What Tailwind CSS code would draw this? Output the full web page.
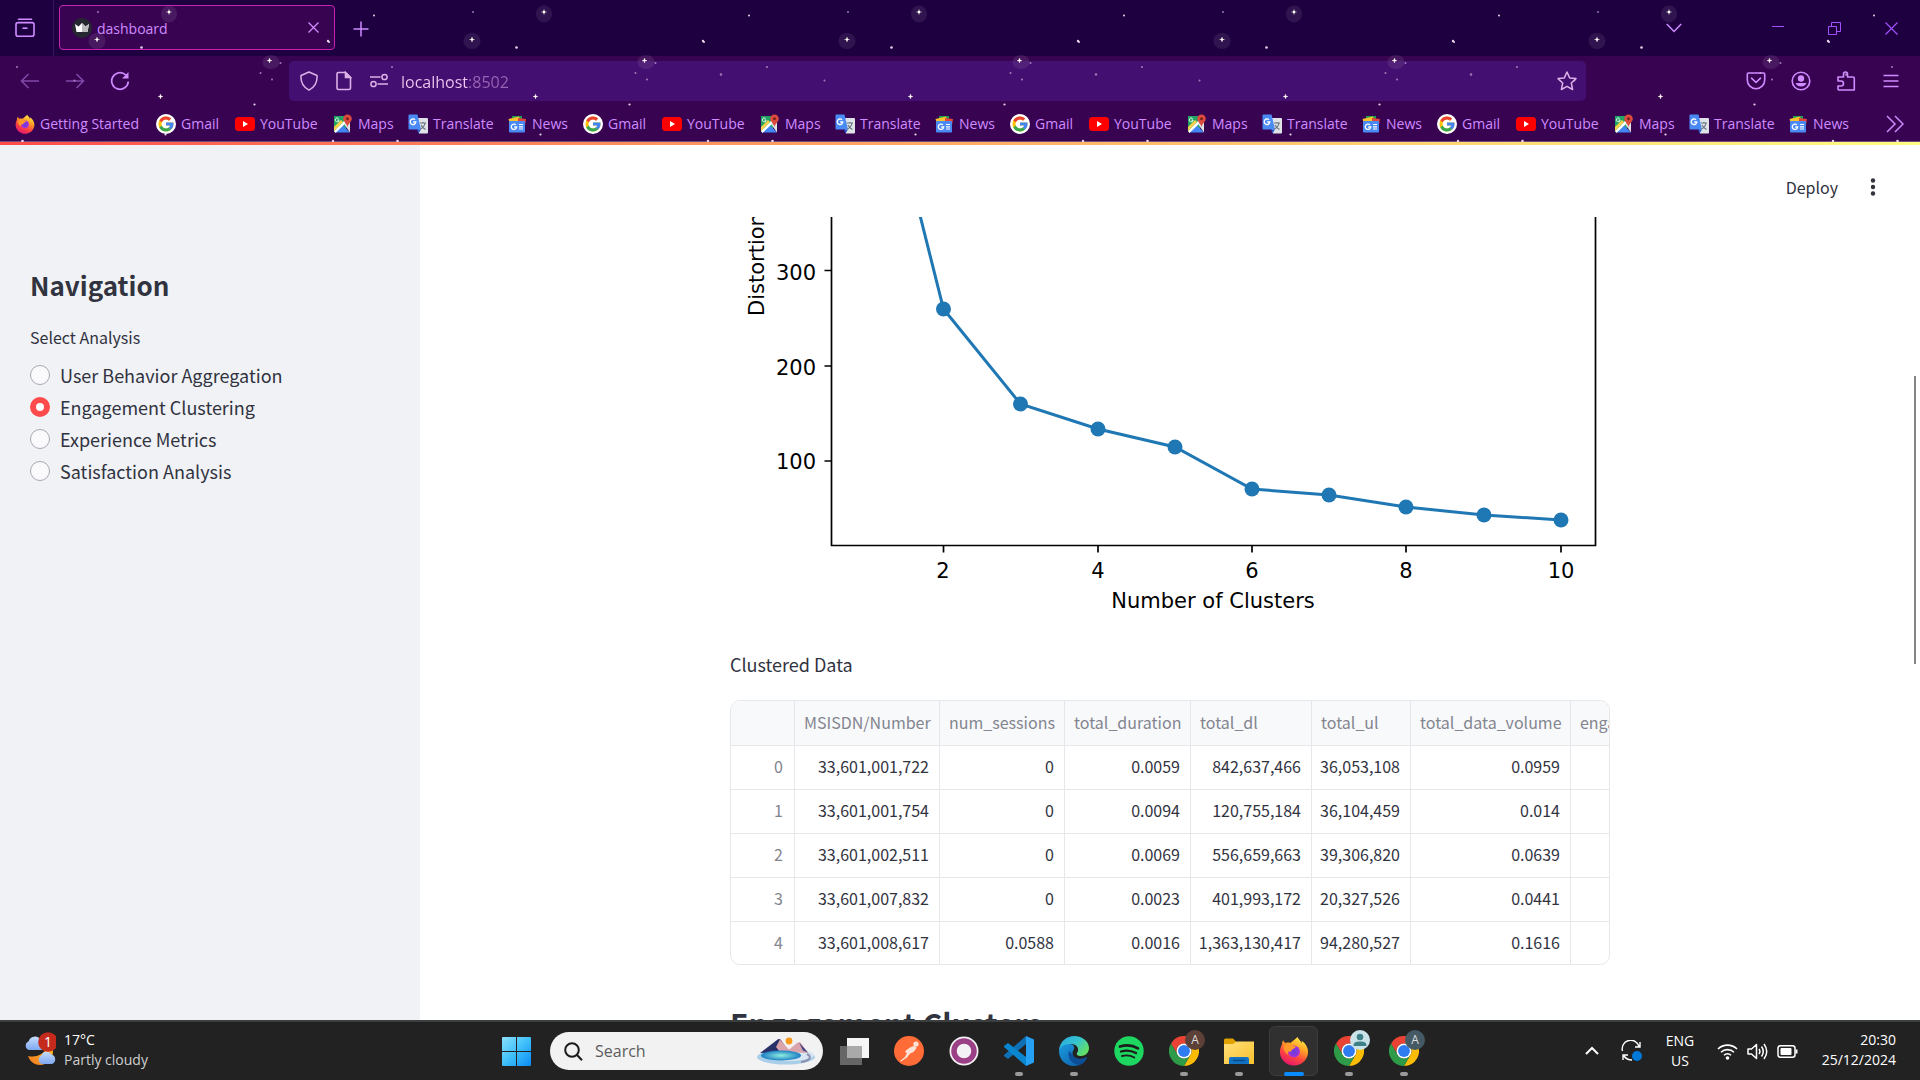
<!DOCTYPE html>
<html lang="en">
<head>
<meta charset="utf-8">
<meta name="viewport" content="width=device-width, initial-scale=1">
<title>dashboard</title>
<script src="https://cdn.jsdelivr.net/npm/@tailwindcss/browser@4"></script>
</head>
<body class="flex h-screen flex-col overflow-hidden bg-white font-['Open_Sans',sans-serif] text-sm">

<!-- Shared icon symbols -->
<svg class="absolute size-0" aria-hidden="true">
  <defs>
    <linearGradient id="ffBody" x1="0.8" y1="0" x2="0.3" y2="1"><stop offset="0" stop-color="#fff44f"/><stop offset=".35" stop-color="#ffa726"/><stop offset=".65" stop-color="#ff4a3d"/><stop offset="1" stop-color="#e5136f"/></linearGradient>
    <radialGradient id="ffGlobe"><stop offset="0" stop-color="#6b3fe0"/><stop offset=".7" stop-color="#8a36d8"/><stop offset="1" stop-color="#b833e1"/></radialGradient>
    <linearGradient id="winBlue" x1="0" y1="0" x2="1" y2="1"><stop offset="0" stop-color="#8be0fb"/><stop offset=".5" stop-color="#3fc0fb"/><stop offset="1" stop-color="#0a8bf5"/></linearGradient>
    <linearGradient id="edgeTop" x1="0" y1="0" x2="1" y2=".6"><stop offset="0" stop-color="#2aa5dc"/><stop offset=".55" stop-color="#35c3d0"/><stop offset="1" stop-color="#62e066"/></linearGradient>
    <linearGradient id="edgeLow" x1="0" y1="0" x2="1" y2="1"><stop offset="0" stop-color="#1b9be0"/><stop offset="1" stop-color="#0c59a4"/></linearGradient>
    <linearGradient id="folder" x1="0" y1="0" x2="1" y2="1"><stop offset="0" stop-color="#ffe07a"/><stop offset="1" stop-color="#fbc02d"/></linearGradient>
    <linearGradient id="cloud" x1="0" y1="0" x2="0" y2="1"><stop offset="0" stop-color="#c5dcfb"/><stop offset="1" stop-color="#7ea8f0"/></linearGradient>
    <linearGradient id="moon" x1="0" y1="1" x2="1" y2="0"><stop offset="0" stop-color="#f0781e"/><stop offset="1" stop-color="#ffc42e"/></linearGradient>
    <radialGradient id="lake"><stop offset="0" stop-color="#8ff0e0"/><stop offset="1" stop-color="#1d7fc4"/></radialGradient>
  </defs>
  <symbol id="firefox" viewBox="0 0 32 32">
    <path fill="url(#ffBody)" d="M19.500 1c1 2 3.500 3.600 4.500 6.600.4-.7.4-1.600.2-2.600C28 7.500 31 12 31 17c0 8-6.700 14.500-15 14.500S1 25 1 17c0-3.500 1-6 2.200-8 0-1.600.4-3.500 1.300-4.500.5 1.400 1.500 2.500 2.500 3 2-.7 4-.6 5.500 0C13.500 5.500 17 4 19.500 1z"/>
    <circle cx="16" cy="16.500" r="6.300" fill="url(#ffGlobe)"/>
    <path fill="#ff9a2a" d="M5 11c3-3 6-3.200 8.500-2 .5 1.500 2.500 2 4.500 2.200-.3 1.500-2 2.300-3.700 2.800-.2 1.300-1.600 1.500-2.300 3C9.500 15.500 9 18 10 20 6 18 4.500 14 5 11z"/>
  </symbol>
  <symbol id="google" viewBox="0 0 48 48">
    <circle cx="24" cy="24" r="24" fill="#fff"/>
    <g transform="translate(2.400 2.400) scale(.9)">
      <path fill="#FFC107" d="M43.600 20H42V20H24v8h11.300c-1.600 4.700-6.100 8-11.300 8-6.600 0-12-5.400-12-12s5.400-12 12-12c3.100 0 5.800 1.200 8 3l5.700-5.700C34 6.100 29.300 4 24 4 12.900 4 4 12.900 4 24s8.900 20 20 20 20-8.900 20-20c0-1.300-.1-2.700-.4-4z"/>
      <path fill="#EA4335" d="M6.300 14.700l6.600 4.800C14.700 15.100 19 12 24 12c3.100 0 5.800 1.200 8 3l5.700-5.700C34 6.100 29.300 4 24 4 16.300 4 9.700 8.300 6.300 14.700z"/>
      <path fill="#34A853" d="M24 44c5.200 0 9.900-2 13.400-5.200l-6.200-5.200C29.200 35.100 26.700 36 24 36c-5.200 0-9.600-3.300-11.300-7.900l-6.500 5C9.500 39.600 16.200 44 24 44z"/>
      <path fill="#4285F4" d="M43.600 20H24v8h11.300c-.8 2.200-2.200 4.200-4.100 5.600l6.200 5.200C37 39.200 44 34 44 24c0-1.300-.1-2.700-.4-4z"/>
    </g>
  </symbol>
  <symbol id="youtube" viewBox="0 0 20 20"><rect y="3" width="20" height="14" rx="3.500" fill="#f00"/><path fill="#fff" d="M8 7v6l5-3z"/></symbol>
  <symbol id="maps" viewBox="0 0 20 20">
    <path fill="#1fa463" d="M1 2h12v16H1z"/><path fill="#4285f4" d="M2 18.500 9.500 11l7.500 7.500z"/><path fill="#fff" d="M1 17 13 5l2 2L2.500 19z"/><path fill="#fbd14b" d="M1 13l7-7 2 2-9 9z"/><path fill="#dfe3e6" d="M11 10l6-2v10.500z"/>
    <path fill="#dd4b3e" d="M14.500.5a4.300 4.300 0 0 0-4.300 4.300c0 3 3.300 4.200 4.300 8.200 1-4 4.300-5.200 4.300-8.200A4.300 4.300 0 0 0 14.500.5z"/><circle cx="14.500" cy="4.800" r="1.500" fill="#7a231b"/>
    <path d="M5.600 4.600A1.900 1.900 0 1 0 6.100 6H4.500" fill="none" stroke="#fff" stroke-width=".9"/>
  </symbol>
  <symbol id="translate" viewBox="0 0 20 20">
    <path fill="#dfe3e8" d="M8 4h11a1 1 0 0 1 1 1v13.500a1 1 0 0 1-1 1h-8z"/><path fill="#4a8af4" d="M1 .5h8.500L13 15.500H1.500a1 1 0 0 1-1-1v-13z"/><path fill="#2a56c6" d="M9 15.500h4l-2.500 4z"/>
    <path d="M12 9h6M15 8v1M17 9c-.5 3-2.500 5-4.500 6M13 11c1 2 2.500 3.500 4.500 4.500" fill="none" stroke="#63727c" stroke-width="1.100"/>
    <path d="M7 5.800A2.800 2.800 0 1 0 7.800 8H5.200" fill="none" stroke="#fff" stroke-width="1.300"/>
  </symbol>
  <symbol id="news" viewBox="0 0 20 20">
    <path fill="#1e9e4f" d="M5 2h10v5H5z"/><path fill="#fbc02d" d="M1.500 5 12 2.500 14 9 3 10z"/><path fill="#e2453a" d="m11 4 8 1-1 6-7-1z"/><rect x="2" y="7" width="16" height="11.500" rx="1" fill="#4a8af4"/>
    <path d="M12 10.500h4M12 12.800h4M12 15h4" stroke="#fff" stroke-width="1.200"/><path d="M8.900 10.800A2.700 2.700 0 1 0 9.700 13H7.200" fill="none" stroke="#fff" stroke-width="1.300"/>
  </symbol>
  <symbol id="chrome" viewBox="0 0 48 48">
    <path fill="#ea4335" d="M24 12h20.800A24 24 0 0 0 3.200 12l10.400 18A12 12 0 0 1 24 12z"/>
    <path fill="#fbbc05" d="M34.400 30 24 48a24 24 0 0 0 20.800-36H24a12 12 0 0 1 10.400 18z"/>
    <path fill="#2d9b48" d="M13.600 30 3.200 12A24 24 0 0 0 24 48l10.400-18a12 12 0 0 1-20.800 0z"/>
    <circle cx="24" cy="24" r="12" fill="#fff"/><circle cx="24" cy="24" r="9.500" fill="#2f7cf0"/>
  </symbol>
</svg>

<!-- Browser chrome -->
<header class="relative flex shrink-0 flex-col bg-[#380452] text-[#cf8bff]">
  <div class="absolute inset-x-0 top-0 h-14 bg-[#1e0040]"></div>
  <svg class="pointer-events-none absolute inset-0 z-10 h-full w-full" aria-hidden="true">
    <defs>
      <g id="spark"><path d="M0-2.500V2.500M-2.500 0H2.500" stroke="#fff3dc" stroke-width="1.100" stroke-opacity=".7"/><circle r="1.200" fill="#fff"/></g>
      <pattern id="stars" width="375" height="142" patternUnits="userSpaceOnUse">
        <g fill="#fff" fill-opacity=".08"><ellipse cx="169" cy="14" rx="8" ry="8.500"/><ellipse cx="97" cy="41" rx="8.500" ry="8"/><ellipse cx="271" cy="62" rx="8.500" ry="7"/></g>
        <use href="#spark" x="169" y="12"/><use href="#spark" x="97" y="39.500"/><use href="#spark" x="269.500" y="60.500"/><use href="#spark" x="160.500" y="96.500"/>
        <g fill="#e8d4e6"><circle cx="141.500" cy="47.500" r="1.300"/><circle cx="328" cy="41" r="1.200"/><circle cx="329" cy="42" r="1"/><circle cx="374" cy="15.500" r="1"/><circle cx="254.500" cy="104.500" r="1.100"/><circle cx="165.500" cy="134.500" r="1.100"/><circle cx="22.500" cy="141" r="1.300"/><circle cx="333" cy="141" r="1.200"/></g>
        <g fill="#d8b6e0" fill-opacity=".65"><circle cx="98" cy="12" r="1"/><circle cx="280.500" cy="63" r="1"/><circle cx="260.500" cy="73" r="1"/><circle cx="272" cy="79.500" r="1"/><circle cx="17" cy="67" r="1"/><circle cx="346" cy="74.500" r="1.200"/><circle cx="74.500" cy="80.500" r="1"/></g>
      </pattern>
    </defs>
    <rect width="100%" height="100%" fill="url(#stars)"/>
  </svg>

  <div class="relative flex h-14">
    <button class="flex w-[54px] items-center justify-center border-r border-[#3a1660] pr-1" aria-label="Firefox View">
      <svg class="size-5" viewBox="0 0 20 20" fill="none" stroke="currentColor" stroke-width="1.600"><path d="M3.500 1.200h13" stroke-linecap="round"/><rect x="1" y="4.600" width="18" height="13.600" rx="2"/><path d="M7.500 10.200h5"/></svg>
    </button>
    <div class="mt-[5px] ml-[5px] flex h-[45px] w-[276px] items-center rounded border border-[#c822b4] bg-[#380452] pr-[9px] pl-3">
      <svg class="size-5 shrink-0" viewBox="0 0 20 20"><circle cx="10" cy="10" r="10" fill="#262730"/><path fill="#fff" d="m3 6 3.500 2.500L10 5l3.500 3.500L17 6l-1.500 8h-11z"/><path fill="#bbb" d="M10 5l3.500 3.500L17 6l-1.500 8H10z"/></svg>
      <span class="ml-[5px] flex-1 pt-0.5">dashboard</span>
      <button class="flex size-6 items-center justify-center" aria-label="Close tab"><svg class="size-[11px]" viewBox="0 0 11 11" fill="none" stroke="currentColor" stroke-width="1.300"><path d="m.5.5 10 10M10.500.5l-10 10"/></svg></button>
    </div>
    <button class="ml-1 flex w-11 items-center justify-center pt-0.5" aria-label="New tab"><svg class="size-4" viewBox="0 0 16 16" stroke="currentColor" stroke-width="1.500"><path d="M8 .5v15M.5 8h15"/></svg></button>
    <div class="flex-1"></div>
    <button class="mr-[55px] flex w-10 items-center justify-center" aria-label="List all tabs"><svg class="size-4" viewBox="0 0 16 16" fill="none" stroke="currentColor" stroke-width="1.500"><path d="m.8 4 7.200 7.500L15.200 4"/></svg></button>
    <div class="flex text-[#a050ff]">
      <button class="flex w-[57px] items-center justify-center" aria-label="Minimize"><svg class="size-3" viewBox="0 0 12 12" stroke="currentColor"><path d="M0 4.500h12"/></svg></button>
      <button class="flex w-[57px] items-center justify-center" aria-label="Restore"><svg class="size-[13px]" viewBox="0 0 13 13" fill="none" stroke="currentColor"><path d="M.5 4.500h8v8h-8zM3.500 4.500v-4h9v9h-4"/></svg></button>
      <button class="flex w-[57px] items-center justify-center" aria-label="Close"><svg class="size-[13px]" viewBox="0 0 13 13" fill="none" stroke="currentColor" stroke-width="1.200"><path d="m.5.500 12 12M12.500.5l-12 12"/></svg></button>
    </div>
  </div>

  <div class="relative flex h-[50px] items-center px-[7px]">
    <button class="flex w-[45px] justify-center opacity-50" aria-label="Back"><svg class="size-5" viewBox="0 0 20 20" fill="none" stroke="currentColor" stroke-width="1.500"><path d="M19 10H1.500M8.500 3l-7 7 7 7"/></svg></button>
    <button class="flex w-[45px] justify-center opacity-50" aria-label="Forward"><svg class="size-5" viewBox="0 0 20 20" fill="none" stroke="currentColor" stroke-width="1.500"><path d="M1 10h17.500M11.500 3l7 7-7 7"/></svg></button>
    <button class="flex w-[45px] justify-center" aria-label="Reload"><svg class="size-5" viewBox="0 0 20 20" fill="none" stroke="currentColor" stroke-width="1.700"><path d="M18.300 10.500A8.300 8.300 0 1 1 15.800 4l1.700 2"/><path d="M18.500 1v6.500H12z" fill="currentColor" stroke="none"/></svg></button>
    <div class="mx-[147px] flex h-10 flex-1 items-center rounded-[5px] bg-[#4e1a8e]/50 pr-[9px] pl-[10px] text-[#dfb0e8]">
      <svg class="size-5" viewBox="0 0 20 20" fill="none" stroke="currentColor" stroke-width="1.500"><path d="M10 1 18 4.500c.5 7-2.500 12-8 14.700C4.500 16.500 1.500 11.500 2 4.500z" stroke-linejoin="round"/></svg>
      <svg class="ml-[15px] size-5" viewBox="0 0 20 20" fill="none" stroke="currentColor" stroke-width="1.600"><path d="M4.500 1.500h7l5 5v10.500a1.500 1.500 0 0 1-1.500 1.500H4.500A1.500 1.500 0 0 1 3 17V3a1.500 1.500 0 0 1 1.500-1.500z"/><path d="M11.500 1.500v5h5z" fill="currentColor"/></svg>
      <svg class="ml-[15px] size-5" viewBox="0 0 20 20" fill="none" stroke="currentColor" stroke-width="1.500"><path d="M1 6h10.500M8.500 13H19"/><circle cx="15.500" cy="6" r="2.600"/><circle cx="4.500" cy="13" r="2.600"/></svg>
      <input type="text" aria-label="Address" value="localhost:8502" class="ml-3 h-8 flex-1 bg-linear-to-r from-[#f0c8f2] from-[68px] to-[#9a64b4] to-[68px] bg-clip-text pt-0.5 text-base text-transparent outline-none">
      <button class="flex" aria-label="Bookmark this page"><svg class="size-5" viewBox="0 0 20 20" fill="none" stroke="currentColor" stroke-width="1.500" stroke-linejoin="round"><path d="m10 1 2.700 5.900 6.300.7-4.700 4.400 1.300 6.500L10 15.300l-5.600 3.200L5.700 12 1 7.600l6.300-.7z"/></svg></button>
    </div>
    <button class="flex w-[45px] justify-center" aria-label="Save to Pocket"><svg class="size-5" viewBox="0 0 20 20" fill="none" stroke="currentColor" stroke-width="1.600" stroke-linejoin="round"><path d="M2.500 2h15A1.300 1.300 0 0 1 18.700 3.300V9a8.700 8.700 0 0 1-17.400 0V3.300A1.300 1.300 0 0 1 2.500 2z"/><path d="m5.500 7.200 4.500 4.300 4.500-4.300" stroke-linecap="round"/></svg></button>
    <button class="flex w-[45px] justify-center" aria-label="Account"><svg class="size-5" viewBox="0 0 20 20"><circle cx="10" cy="10" r="8.800" fill="none" stroke="currentColor" stroke-width="1.600"/><circle cx="10" cy="7.500" r="3.200" fill="currentColor"/><path d="M4.500 12h11c-1 2.500-3 3.500-5.500 3.500S5.500 14.500 4.500 12z" fill="currentColor"/></svg></button>
    <button class="flex w-[45px] justify-center" aria-label="Extensions"><svg class="size-5" viewBox="0 0 20 20" fill="none" stroke="currentColor" stroke-width="1.600" stroke-linejoin="round"><path d="M2 8V6h5.500V3a2 2 0 0 1 4 0v3H17a1.300 1.300 0 0 1 1.300 1.300V19H3.300A1.300 1.300 0 0 1 2 17.700V15h3a2 2 0 0 0 0-5H2z"/></svg></button>
    <button class="flex w-[45px] justify-center" aria-label="Menu"><svg class="size-4" viewBox="0 0 16 16" stroke="currentColor" stroke-width="1.500"><path d="M.5 2.500h15M.5 8h15M.5 13.500h15"/></svg></button>
  </div>

  <nav class="relative flex h-9 items-center overflow-hidden border-b border-[#6b4a78] pt-px pl-[15px] whitespace-nowrap" aria-label="Bookmarks">
    <a href="#" class="flex w-[141px] shrink-0 items-center gap-[5px]"><svg class="size-5 shrink-0"><use href="#firefox"/></svg>Getting Started</a>
    <a href="#" class="flex w-[79px] shrink-0 items-center gap-[5px]"><svg class="size-5 shrink-0"><use href="#google"/></svg>Gmail</a>
    <a href="#" class="flex w-[98px] shrink-0 items-center gap-[5px]"><svg class="size-5 shrink-0"><use href="#youtube"/></svg>YouTube</a>
    <a href="#" class="flex w-[75px] shrink-0 items-center gap-[5px]"><svg class="size-5 shrink-0"><use href="#maps"/></svg>Maps</a>
    <a href="#" class="flex w-[99px] shrink-0 items-center gap-[5px]"><svg class="size-5 shrink-0"><use href="#translate"/></svg>Translate</a>
    <a href="#" class="flex w-[76px] shrink-0 items-center gap-[5px]"><svg class="size-5 shrink-0"><use href="#news"/></svg>News</a>
    <a href="#" class="flex w-[79px] shrink-0 items-center gap-[5px]"><svg class="size-5 shrink-0"><use href="#google"/></svg>Gmail</a>
    <a href="#" class="flex w-[98px] shrink-0 items-center gap-[5px]"><svg class="size-5 shrink-0"><use href="#youtube"/></svg>YouTube</a>
    <a href="#" class="flex w-[75px] shrink-0 items-center gap-[5px]"><svg class="size-5 shrink-0"><use href="#maps"/></svg>Maps</a>
    <a href="#" class="flex w-[99px] shrink-0 items-center gap-[5px]"><svg class="size-5 shrink-0"><use href="#translate"/></svg>Translate</a>
    <a href="#" class="flex w-[76px] shrink-0 items-center gap-[5px]"><svg class="size-5 shrink-0"><use href="#news"/></svg>News</a>
    <a href="#" class="flex w-[79px] shrink-0 items-center gap-[5px]"><svg class="size-5 shrink-0"><use href="#google"/></svg>Gmail</a>
    <a href="#" class="flex w-[98px] shrink-0 items-center gap-[5px]"><svg class="size-5 shrink-0"><use href="#youtube"/></svg>YouTube</a>
    <a href="#" class="flex w-[75px] shrink-0 items-center gap-[5px]"><svg class="size-5 shrink-0"><use href="#maps"/></svg>Maps</a>
    <a href="#" class="flex w-[99px] shrink-0 items-center gap-[5px]"><svg class="size-5 shrink-0"><use href="#translate"/></svg>Translate</a>
    <a href="#" class="flex w-[76px] shrink-0 items-center gap-[5px]"><svg class="size-5 shrink-0"><use href="#news"/></svg>News</a>
    <a href="#" class="flex w-[79px] shrink-0 items-center gap-[5px]"><svg class="size-5 shrink-0"><use href="#google"/></svg>Gmail</a>
    <a href="#" class="flex w-[98px] shrink-0 items-center gap-[5px]"><svg class="size-5 shrink-0"><use href="#youtube"/></svg>YouTube</a>
    <a href="#" class="flex w-[75px] shrink-0 items-center gap-[5px]"><svg class="size-5 shrink-0"><use href="#maps"/></svg>Maps</a>
    <a href="#" class="flex w-[99px] shrink-0 items-center gap-[5px]"><svg class="size-5 shrink-0"><use href="#translate"/></svg>Translate</a>
    <a href="#" class="flex w-[76px] shrink-0 items-center gap-[5px]"><svg class="size-5 shrink-0"><use href="#news"/></svg>News</a>
    <button class="ml-auto flex shrink-0 pr-4" aria-label="More bookmarks"><svg class="size-[18px]" viewBox="0 0 18 18" fill="none" stroke="currentColor" stroke-width="1.500"><path d="m1 1 8 8-8 8M9 1l8 8-8 8"/></svg></button>
  </nav>
</header>

<!-- Dashboard page -->
<div class="relative flex min-h-0 flex-1 font-['Noto_Sans_CJK_SC',sans-serif] text-[#31333f]">
  <div class="absolute inset-x-0 top-0 h-[3px] bg-linear-to-r from-[#ff4b4b] to-[#fffd80]"></div>

  <aside class="w-[420px] shrink-0 bg-[#f0f2f6] px-[30px] pt-[125px]">
    <h2 class="text-[26px] leading-9 font-bold">Navigation</h2>
    <fieldset class="mt-[22px]">
      <legend class="mb-2.5 text-base leading-6">Select Analysis</legend>
      <div class="flex flex-col">
        <label class="flex h-8 items-center gap-[10px] text-lg leading-8"><input type="radio" name="analysis" class="size-5 appearance-none rounded-full border border-[#a3a8b4] bg-[#fafafc]">User Behavior Aggregation</label>
        <label class="flex h-8 items-center gap-[10px] text-lg leading-8"><input type="radio" name="analysis" checked class="size-5 appearance-none rounded-full border-[6px] border-[#ff4b4b] bg-white">Engagement Clustering</label>
        <label class="flex h-8 items-center gap-[10px] text-lg leading-8"><input type="radio" name="analysis" class="size-5 appearance-none rounded-full border border-[#a3a8b4] bg-[#fafafc]">Experience Metrics</label>
        <label class="flex h-8 items-center gap-[10px] text-lg leading-8"><input type="radio" name="analysis" class="size-5 appearance-none rounded-full border border-[#a3a8b4] bg-[#fafafc]">Satisfaction Analysis</label>
      </div>
    </fieldset>
  </aside>

  <main class="flex min-w-0 flex-1 flex-col">
    <div class="flex h-[75px] shrink-0 items-end justify-end pr-[37px] pb-[18px]">
      <button class="text-base leading-6">Deploy</button>
      <button class="ml-[25px] flex h-6 w-5 items-center justify-center" aria-label="Main menu"><svg class="h-[18px] w-1.5" viewBox="0 0 6 18" fill="currentColor"><circle cx="3" cy="2.500" r="2.200"/><circle cx="3" cy="9" r="2.200"/><circle cx="3" cy="15.500" r="2.200"/></svg></button>
    </div>
    <div class="min-h-0 flex-1 overflow-hidden">
      <div class="mx-auto w-full max-w-[880px]">
        <svg class="block w-full font-['DejaVu_Sans',sans-serif]" viewBox="730 217 880 413" role="img" aria-label="Distortion by number of clusters">
          <path d="M831.500 200V545.500H1595.500V200M831.500 270.500h-7M831.500 366h-7M831.500 461h-7M943.500 545.500v7M1098 545.500v7M1252 545.500v7M1406 545.500v7M1561 545.500v7" fill="none" stroke="#000" stroke-width="1.700"/>
          <g font-size="21" fill="#000">
            <g text-anchor="end"><text x="816" y="280">300</text><text x="816" y="375">200</text><text x="816" y="469">100</text></g>
            <g text-anchor="middle"><text x="943" y="578">2</text><text x="1098" y="578">4</text><text x="1252" y="578">6</text><text x="1406" y="578">8</text><text x="1561" y="578">10</text><text x="1213" y="608">Number of Clusters</text></g>
            <text transform="translate(764 316) rotate(-90)">Distortion</text>
          </g>
          <path d="M866 0 943.500 309 1020.500 404 1098 429 1175 447 1252 489 1329 495 1406 507 1484 515 1561 520" fill="none" stroke="#1f77b4" stroke-width="3"/>
          <g fill="#1f77b4"><circle cx="943.500" cy="309" r="7.500"/><circle cx="1020.500" cy="404" r="7.500"/><circle cx="1098" cy="429" r="7.500"/><circle cx="1175" cy="447" r="7.500"/><circle cx="1252" cy="489" r="7.500"/><circle cx="1329" cy="495" r="7.500"/><circle cx="1406" cy="507" r="7.500"/><circle cx="1484" cy="515" r="7.500"/><circle cx="1561" cy="520" r="7.500"/></g>
        </svg>
        <p class="mt-[18px] text-lg leading-8">Clustered Data</p>
        <div class="mt-5 overflow-hidden rounded-[10px] border border-[#e6e7ea]">
          <table class="w-[950px] table-fixed border-separate border-spacing-0 text-right text-base leading-5 whitespace-nowrap">
            <colgroup><col class="w-16"><col class="w-[145px]"><col class="w-[125px]"><col class="w-[126px]"><col class="w-[121px]"><col class="w-[99px]"><col class="w-40"><col class="w-[110px]"></colgroup>
            <thead class="bg-[#f8f9fb] text-left text-[#83858f] [&_th]:h-[45px] [&_th]:border-r [&_th]:border-b [&_th]:border-[#e6e7ea] [&_th]:px-[9px] [&_th]:pb-[3px] [&_th]:font-normal">
              <tr><th></th><th scope="col">MSISDN/Number</th><th scope="col">num_sessions</th><th scope="col">total_duration</th><th scope="col">total_dl</th><th scope="col">total_ul</th><th scope="col">total_data_volume</th><th scope="col">engagement</th></tr>
            </thead>
            <tbody class="[&_td]:h-11 [&_td]:border-r [&_td]:border-b [&_td]:border-[#e6e7ea] [&_td]:pr-[10px] [&_td]:pb-[3px] [&_th]:border-r [&_th]:border-b [&_th]:border-[#e6e7ea] [&_th]:pr-[11px] [&_th]:pb-[3px] [&_th]:font-normal [&_th]:text-[#83858f] [&_tr:last-child>*]:h-[42px] [&_tr:last-child>*]:border-b-0">
              <tr><th scope="row">0</th><td>33,601,001,722</td><td>0</td><td>0.0059</td><td>842,637,466</td><td>36,053,108</td><td>0.0959</td><td></td></tr>
              <tr><th scope="row">1</th><td>33,601,001,754</td><td>0</td><td>0.0094</td><td>120,755,184</td><td>36,104,459</td><td>0.014</td><td></td></tr>
              <tr><th scope="row">2</th><td>33,601,002,511</td><td>0</td><td>0.0069</td><td>556,659,663</td><td>39,306,820</td><td>0.0639</td><td></td></tr>
              <tr><th scope="row">3</th><td>33,601,007,832</td><td>0</td><td>0.0023</td><td>401,993,172</td><td>20,327,526</td><td>0.0441</td><td></td></tr>
              <tr><th scope="row">4</th><td>33,601,008,617</td><td>0.0588</td><td>0.0016</td><td>1,363,130,417</td><td>94,280,527</td><td>0.1616</td><td></td></tr>
            </tbody>
          </table>
        </div>
        <h2 class="mt-[37px] text-[30px] leading-[42px] font-bold">Engagement Clusters</h2>
      </div>
    </div>
  </main>
  <div class="absolute top-[234px] right-[4px] h-72 w-0.5 bg-[#858585]"></div>
</div>

<!-- Taskbar -->
<footer class="grid h-[60px] shrink-0 grid-cols-[1fr_auto_1fr] items-center border-t-2 border-[#3c3f40] bg-[#222] text-white">
  <button class="flex items-center gap-2 pb-0.5 pl-6 text-left leading-5">
    <svg class="h-9 w-8" viewBox="0 0 32 36">
      <path fill="url(#cloud)" d="M5 18a4.500 4.500 0 0 1-.5-8.500 6.500 6.500 0 0 1 12-1.500 5 5 0 0 1 3.500 10z"/>
      <path fill="url(#moon)" d="M24 13c5 0 5 3 5 6 0 9-6 14-13 14-5 0-10-3-12-9 9 2 17-2 20-11z"/>
      <path fill="url(#cloud)" d="M18 32a4.500 4.500 0 0 1-.5-8.500 5.500 5.500 0 0 1 10-1A5 5 0 0 1 28 32z"/>
      <circle cx="24" cy="10" r="9.800" fill="#c42b1c"/><text x="24" y="15" font-size="14" text-anchor="middle" fill="#fff">1</text>
    </svg>
    <span class="flex flex-col"><span>17°C</span><span class="text-[#cfcfcf]">Partly cloudy</span></span>
  </button>

  <div class="flex items-center">
    <button class="flex w-[55px] justify-center" aria-label="Start"><svg class="size-[29px]" viewBox="0 0 29 29"><path fill="url(#winBlue)" d="M0 1a1 1 0 0 1 1-1h13v14H0zM15 0h13a1 1 0 0 1 1 1v13H15zM0 15h14v14H1a1 1 0 0 1-1-1zM15 15h14v13a1 1 0 0 1-1 1H15z"/></svg></button>
    <div class="mr-[3px] ml-1.5 flex h-[38px] w-[273px] items-center rounded-full bg-[#f2f2f2] pr-2 pl-3.5">
      <svg class="size-[19px] shrink-0" viewBox="0 0 19 19" fill="none" stroke="#1b1b1b" stroke-width="2"><circle cx="8" cy="8" r="6.800"/><path d="m12.800 12.800 5.200 5.500"/></svg>
      <input type="text" placeholder="Search" aria-label="Search" class="ml-3 w-0 flex-1 bg-transparent text-base outline-none placeholder:text-[#5c5c5c]">
      <svg class="h-7 w-[58px]" viewBox="0 0 58 28"><ellipse cx="29" cy="20" rx="29" ry="7.500" fill="#a9cfe8"/><ellipse cx="33" cy="18" rx="24" ry="6" fill="#d7e6f2"/><path fill="#283168" d="M3 16 20 3q2-2 4 0l8 12z"/><path fill="#d9a4ab" d="M23 2.500 34 15H23l-4-5z"/><path fill="#d9a4ab" d="M29 15 40 6q2-1.500 4 0l7 10z"/><path fill="#3b4585" d="m42 5.500 9 10-5-2z"/><circle cx="32" cy="4" r="3.400" fill="#f99a1c"/><ellipse cx="24" cy="18.500" rx="20" ry="5" fill="url(#lake)"/><path d="M50 17c6 3 2 7-6 8" fill="none" stroke="#8c8fb0" stroke-width="2"/></svg>
    </div>
    <button class="flex w-[55px] justify-center" aria-label="Task view"><svg class="size-[30px]" viewBox="0 0 30 30"><path fill="#666" d="M1 10h22v19H1z"/><path fill="#f4f4f4" d="M8 2h22v20H8z"/><path fill="#a9a9a9" d="M8 10h15v12H8z"/></svg></button>
    <button class="flex w-[55px] justify-center" aria-label="Postman"><svg class="size-[30px]" viewBox="0 0 30 30"><circle cx="15" cy="15" r="15" fill="#ff6c37"/><circle cx="22" cy="8" r="2.600" fill="#fde4da"/><path fill="#fde4da" d="M20 10c-4 1-8 4-9 6l2 1-2 4-5 4 1 .5 6-4 3-4c4-1 6-4 6.500-6.500z"/></svg></button>
    <button class="flex w-[55px] justify-center" aria-label="Recorder"><svg class="size-[30px]" viewBox="0 0 30 30"><circle cx="15" cy="15" r="14.500" fill="#f3f1f3"/><circle cx="15" cy="15" r="10" fill="none" stroke="#9b3f86" stroke-width="5.500"/></svg></button>
    <button class="relative flex h-[50px] w-[55px] items-center justify-center" aria-label="Visual Studio Code"><svg class="size-[30px]" viewBox="0 0 30 30"><path fill="#0f70b5" d="M22 0v8L4 23l-4-3v-1z"/><path fill="#0a85cf" d="m0 10 4-3 18 14v9L0 11z"/><path fill="#25a0f2" d="m22 0 8 3.500v23L22 30z"/></svg><span class="absolute bottom-0 h-1 w-2 rounded-full bg-[#9a9a9a]"></span></button>
    <button class="relative flex h-[50px] w-[55px] items-center justify-center" aria-label="Edge"><svg class="size-[30px]" viewBox="0 0 30 30"><path fill="url(#edgeLow)" d="M0 15C0 9 6 7 11 8c5 1 5 4 3 7-2 5 2 8 7 8 3 0 5-1 7-2-2 6-8 9-13 9C6 30 0 23 0 15z"/><path fill="#0d4f96" d="M10 15c-2 6 2 13 10 14 4-1 7-4 8-8-5 3-12 3-14-2z"/><path fill="url(#edgeTop)" d="M0 14C1 5 8 0 15 0c9 0 15 6 15 12 0 5-4 8-8 8-3 0-5-1-4-3 3-4 0-9-6-9C6 8 2 10 0 14z"/></svg><span class="absolute bottom-0 h-1 w-2 rounded-full bg-[#9a9a9a]"></span></button>
    <button class="flex w-[55px] justify-center" aria-label="Spotify"><svg class="size-[30px]" viewBox="0 0 30 30"><circle cx="15" cy="15" r="14.700" fill="#1ed760"/><g fill="none" stroke="#1c1c1c" stroke-linecap="round"><path d="M6 10.500c6-1.800 13-1.200 18 1.800" stroke-width="2.700"/><path d="M7 15.500c5-1.500 10.500-1 15 1.600" stroke-width="2.300"/><path d="M8 20c4-1 8.500-.7 12.300 1.500" stroke-width="1.900"/></g></svg></button>
    <button class="relative flex h-[50px] w-[55px] items-center justify-center" aria-label="Chrome, profile A"><svg class="size-[30px]"><use href="#chrome"/></svg><span class="absolute top-1 left-[29px] flex size-5 items-center justify-center rounded-full bg-[#5d4037] text-xs text-[#ddd]">A</span><span class="absolute bottom-0 h-1 w-2 rounded-full bg-[#9a9a9a]"></span></button>
    <button class="relative flex h-[50px] w-[55px] items-center justify-center" aria-label="File Explorer"><svg class="size-[30px]" viewBox="0 0 30 30"><path fill="#e0a100" d="M0 4a1.500 1.500 0 0 1 1.500-1.500H9L12.500 6v4H0z"/><path fill="url(#folder)" d="M0 8h9l3.500-2.500H30V28H0z"/><path fill="#1273c4" d="M5 28v-5a2 2 0 0 1 2-2h16a2 2 0 0 1 2 2v5z"/><path d="M9 24.500h12" stroke="#0b4a86" stroke-width="1.500"/></svg><span class="absolute bottom-0 h-1 w-2 rounded-full bg-[#9a9a9a]"></span></button>
    <button class="relative flex h-[50px] w-[55px] items-center justify-center" aria-label="Firefox"><span class="absolute inset-x-[3px] inset-y-0 rounded-md border border-[#3d3d3d] bg-[#303030]"></span><svg class="relative size-[30px]"><use href="#firefox"/></svg><span class="absolute bottom-0 h-1 w-5 rounded-full bg-[#0a8bff]"></span></button>
    <button class="relative flex h-[50px] w-[55px] items-center justify-center" aria-label="Chrome, guest profile"><svg class="size-[30px]"><use href="#chrome"/></svg><svg class="absolute top-1 left-[29px] size-5" viewBox="0 0 20 20"><circle cx="10" cy="10" r="10" fill="#c9e3e8"/><circle cx="10" cy="7" r="3.300" fill="#3d8088"/><path fill="#3d8088" d="M3.500 16c0-4 3-4.500 6.500-4.500s6.500.5 6.500 4.500z"/></svg><span class="absolute bottom-0 h-1 w-2 rounded-full bg-[#9a9a9a]"></span></button>
    <button class="relative flex h-[50px] w-[55px] items-center justify-center" aria-label="Chrome, second profile"><svg class="size-[30px]"><use href="#chrome"/></svg><span class="absolute top-1 left-[29px] flex size-5 items-center justify-center rounded-full bg-[#455a64] text-xs text-[#ddd]">A</span><span class="absolute bottom-0 h-1 w-2 rounded-full bg-[#9a9a9a]"></span></button>
  </div>

  <div class="flex items-center justify-end pr-6 leading-5">
    <button aria-label="Show hidden icons"><svg class="h-3 w-3.5" viewBox="0 0 14 12" fill="none" stroke="currentColor" stroke-width="2"><path d="m1 9 6-6 6 6"/></svg></button>
    <button class="ml-[22px]" aria-label="Updates"><svg class="h-[22px] w-[22px]" viewBox="0 0 22 22" fill="none" stroke="currentColor" stroke-width="1.400"><path d="M1.500 11A8.500 8.500 0 0 1 18 6.500M19 2v5h-5M2 20v-5h5M3 16c2 3 5 4 8 4"/><circle cx="16" cy="16" r="5" fill="#0078d7" stroke="none"/></svg></button>
    <button class="ml-[22px] w-[30px] text-center">ENG US</button>
    <button class="ml-[22px] flex items-center gap-[9px]" aria-label="Network, volume, battery">
      <svg class="size-[21px]" viewBox="0 0 21 21" fill="none" stroke="currentColor" stroke-width="1.600"><path d="M1 8a13.500 13.500 0 0 1 19 0M4 11.300a9.200 9.200 0 0 1 13 0M7 14.300a5 5 0 0 1 7 0"/><circle cx="10.500" cy="17" r="1.800" fill="currentColor" stroke="none"/></svg>
      <svg class="size-[21px]" viewBox="0 0 21 21" fill="none" stroke="currentColor" stroke-width="1.500" stroke-linejoin="round"><path d="M1 8h3.500L9.500 3.500v14L4.500 13H1zM12 8q1.800 2.500 0 5M14.500 5.500q3.500 5 0 10M17 3q5.500 7.500 0 15"/></svg>
      <svg class="size-[21px]" viewBox="0 0 21 21"><rect x="1" y="4.800" width="17" height="11.400" rx="2.500" fill="none" stroke="currentColor" stroke-width="1.500"/><rect x="3.500" y="7" width="11" height="7" rx="1" fill="currentColor"/><path d="M18.500 8.500h2v4h-2z" fill="currentColor"/></svg>
    </button>
    <button class="ml-[18px] w-[80px] pb-0.5 text-right"><span class="block">20:30</span><span class="block">25/12/2024</span></button>
  </div>
</footer>
</body>
</html>
